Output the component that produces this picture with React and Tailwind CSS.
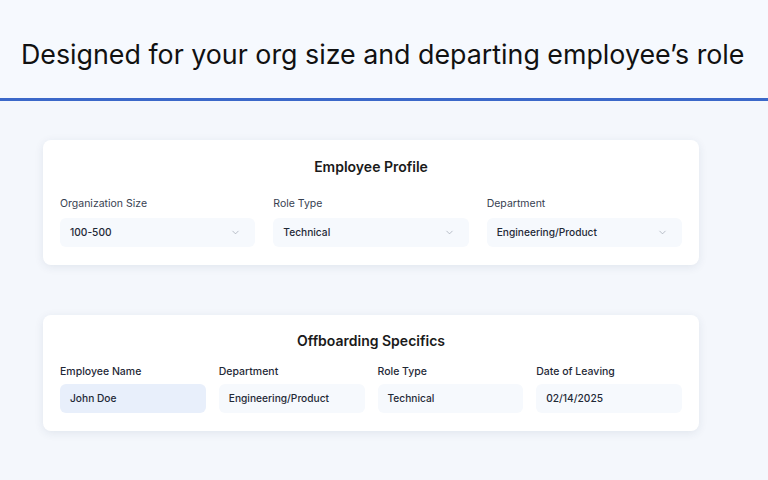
import { ChevronDown } from 'lucide-react';

const profileFields = [
  { label: 'Organization Size', value: '100-500' },
  { label: 'Role Type', value: 'Technical' },
  { label: 'Department', value: 'Engineering/Product' },
];

const specifics = [
  { label: 'Employee Name', value: 'John Doe', active: true },
  { label: 'Department', value: 'Engineering/Product' },
  { label: 'Role Type', value: 'Technical' },
  { label: 'Date of Leaving', value: '02/14/2025' },
];

export default function App() {
  return (
    <div className="w-[768px] h-[480px] overflow-hidden bg-[#f4f7fc] font-['Inter',sans-serif] text-[#111827]">
      {/* Headline */}
      <div className="h-[98px] bg-[#f6f9fe] flex items-center pl-[21px] pt-[10px]">
        <h1 className="text-[26.8px] font-normal text-[#111]">
          Designed for your org size and departing employee’s role
        </h1>
      </div>
      <div className="h-[3px] bg-[#3b68c9]" />

      <div className="px-[43px] pt-[39px]">
        {/* Employee Profile */}
        <div className="w-[656px] bg-white rounded-[8px] shadow-[0_2px_10px_rgba(30,50,90,0.09)] pt-[17px] pb-[18px] px-[17px]">
          <h2 className="text-center text-[14px] font-semibold text-[#1a1a1a] leading-[20px]">Employee Profile</h2>
          <div className="grid grid-cols-3 gap-[18px] mt-[20px]">
            {profileFields.map((f) => (
              <div key={f.label}>
                <div className="text-[10.5px] text-[#374151] leading-[14px] mb-[7px]">{f.label}</div>
                <div className="h-[29px] rounded-[6px] bg-[#f6f9fd] flex items-center justify-between pl-[10px] pr-[14px]">
                  <span className="text-[10.2px] font-medium text-[#1f2937]">{f.value}</span>
                  <ChevronDown className="w-[11px] h-[11px] text-[#9ca3af]" strokeWidth={1.5} />
                </div>
              </div>
            ))}
          </div>
        </div>

        {/* Offboarding Specifics */}
        <div className="w-[656px] mt-[50px] bg-white rounded-[8px] shadow-[0_2px_10px_rgba(30,50,90,0.09)] pt-[16px] pb-[18px] px-[17px]">
          <h2 className="text-center text-[14px] font-semibold text-[#1a1a1a] leading-[20px]">Offboarding Specifics</h2>
          <div className="grid grid-cols-4 gap-[13px] mt-[14px]">
            {specifics.map((f) => (
              <div key={f.label}>
                <div className="text-[10.5px] font-medium text-[#1f2937] leading-[14px] mb-[5px]">{f.label}</div>
                <div
                  className={`h-[29px] rounded-[6px] flex items-center pl-[10px] ${
                    f.active ? 'bg-[#e8effb]' : 'bg-[#f6f9fd]'
                  }`}
                >
                  <span className="text-[10.2px] font-medium text-[#1f2937]">{f.value}</span>
                </div>
              </div>
            ))}
          </div>
        </div>
      </div>
    </div>
  );
}
